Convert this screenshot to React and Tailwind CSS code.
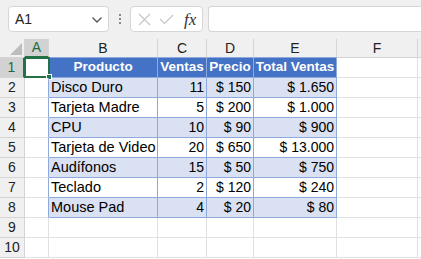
import React from "react";

const cols = [
  { name: "A", w: 24 },
  { name: "B", w: 109 },
  { name: "C", w: 49 },
  { name: "D", w: 47 },
  { name: "E", w: 83 },
  { name: "F", w: 81 },
];

const rows = [
  ["Disco Duro", "11", "$ 150", "$ 1.650"],
  ["Tarjeta Madre", "5", "$ 200", "$ 1.000"],
  ["CPU", "10", "$ 90", "$ 900"],
  ["Tarjeta de Video", "20", "$ 650", "$ 13.000"],
  ["Audífonos", "15", "$ 50", "$ 750"],
  ["Teclado", "2", "$ 120", "$ 240"],
  ["Mouse Pad", "4", "$ 20", "$ 80"],
];

const cellFont = { fontFamily: "'Liberation Sans', Arial, sans-serif" };

function TopBar() {
  return (
    <div className="flex items-center h-[39px] bg-[#f0f0f0] pl-2 pb-[1px]">
      <div className="flex items-center justify-between w-[101px] h-[26px] bg-white border border-[#d6d6d6] rounded-[4px] pl-[6px] pr-[5px]">
        <span className="text-[14px] text-[#222]" style={cellFont}>A1</span>
        <svg width="12" height="8" viewBox="0 0 12 8" className="mt-[1px]">
          <path d="M1.5 1.5 L6 6 L10.5 1.5" fill="none" stroke="#555" strokeWidth="1.3" />
        </svg>
      </div>
      <div className="w-[21px] flex flex-col items-center gap-[2px]">
        <span className="w-[2px] h-[2px] bg-[#8a8a8a]" />
        <span className="w-[2px] h-[2px] bg-[#8a8a8a]" />
        <span className="w-[2px] h-[2px] bg-[#8a8a8a]" />
      </div>
      <div className="flex items-center w-[73px] h-[26px] bg-white border border-[#d6d6d6] rounded-[4px] pl-[7px] gap-[8px]">
        <svg width="13" height="13" viewBox="0 0 13 13">
          <path d="M1 1 L12 12 M12 1 L1 12" stroke="#c4c4c4" strokeWidth="1.1" fill="none" />
        </svg>
        <svg width="15" height="11" viewBox="0 0 15 11">
          <path d="M1 5 L5.5 9.5 L14 1" stroke="#c4c4c4" strokeWidth="1.1" fill="none" />
        </svg>
        <span className="italic text-[17px] text-[#333] leading-none ml-[2px]" style={{ fontFamily: "'Liberation Serif', 'Times New Roman', serif" }}>
          fx
        </span>
      </div>
      <div className="ml-[5px] flex-1 h-[26px] bg-white border border-[#d6d6d6] rounded-l-[4px] border-r-0" />
    </div>
  );
}

function ColHeader() {
  return (
    <div className="flex h-[19px] bg-[#f0f0f0]">
      <div className="w-[25px] border-r border-b border-[#d4d4d4] flex items-end justify-end pr-[2px] pb-[2px]">
        <svg width="12" height="12" viewBox="0 0 12 12">
          <path d="M12 0 L12 12 L0 12 Z" fill="#bdbdbd" />
        </svg>
      </div>
      {cols.map((c, i) => {
        const sel = i === 0;
        const inTable = i >= 1 && i <= 4;
        return (
          <div
            key={c.name}
            style={{ width: c.w, ...cellFont }}
            className={
              "flex items-center justify-center text-[14px] border-r border-[#d4d4d4] " +
              (sel
                ? "bg-[#d2d2d2] text-[#1e6b41] border-b-2 border-b-[#217346]"
                : inTable
                ? "text-[#222] border-b border-b-[#8ea9db]"
                : "text-[#222] border-b border-b-[#d4d4d4]")
            }
          >
            {c.name}
          </div>
        );
      })}
      <div className="flex-1 border-b border-[#d4d4d4]" />
    </div>
  );
}

function Row({ n, data, header, band }) {
  const inTable = n <= 8;
  const bg = header ? "bg-[#4472c4]" : band ? "bg-[#d9e1f2]" : "bg-white";
  const rowSel = n === 1;
  return (
    <div className="flex h-[20px]">
      <div
        style={cellFont}
        className={
          "w-[25px] flex items-center justify-center text-[14px] border-r border-b border-[#d4d4d4] " +
          (rowSel ? "bg-[#d2d2d2] text-[#1e6b41] border-r-2 border-r-[#217346]" : "bg-[#f0f0f0] text-[#222]")
        }
      >
        {n}
      </div>
      <div
        className={
          "relative w-[24px] bg-white border-b border-[#e1e1e1] border-r " +
          (inTable ? "border-r-[#8ea9db]" : "border-r-[#e1e1e1]")
        }
      >
        {n === 1 && (
          <div className="absolute -left-[1px] -top-[1px] w-[26px] h-[21px] border-2 border-[#217346]">
            <div className="absolute -right-[4px] -bottom-[4px] w-[6px] h-[6px] bg-[#217346] border border-white" />
          </div>
        )}
      </div>
      {data ? (
        data.map((v, i) => (
          <div
            key={i}
            style={{ width: cols[i + 1].w, ...cellFont }}
            className={
              "flex items-center px-[2px] border-r border-b border-[#8ea9db] whitespace-nowrap " +
              bg +
              (header
                ? " justify-center font-bold text-white text-[13.5px]"
                : i === 0
                ? " justify-start text-black text-[14.5px]"
                : " justify-end text-black text-[14px]")
            }
          >
            {v}
          </div>
        ))
      ) : (
        cols.slice(1, 5).map((c) => (
          <div key={c.name} style={{ width: c.w }} className="bg-white border-r border-b border-[#e1e1e1]" />
        ))
      )}
      <div style={{ width: 81 }} className="bg-white border-r border-b border-[#e1e1e1]" />
      <div className="flex-1 bg-white border-b border-[#e1e1e1]" />
    </div>
  );
}

export default function App() {
  return (
    <div className="w-[421px] h-[259px] overflow-hidden bg-white select-none">
      <TopBar />
      <ColHeader />
      <Row n={1} header data={["Producto", "Ventas", "Precio", "Total Ventas"]} />
      {rows.map((r, i) => (
        <Row key={i} n={i + 2} data={r} band={i % 2 === 0} />
      ))}
      <Row n={9} />
      <Row n={10} />
    </div>
  );
}
